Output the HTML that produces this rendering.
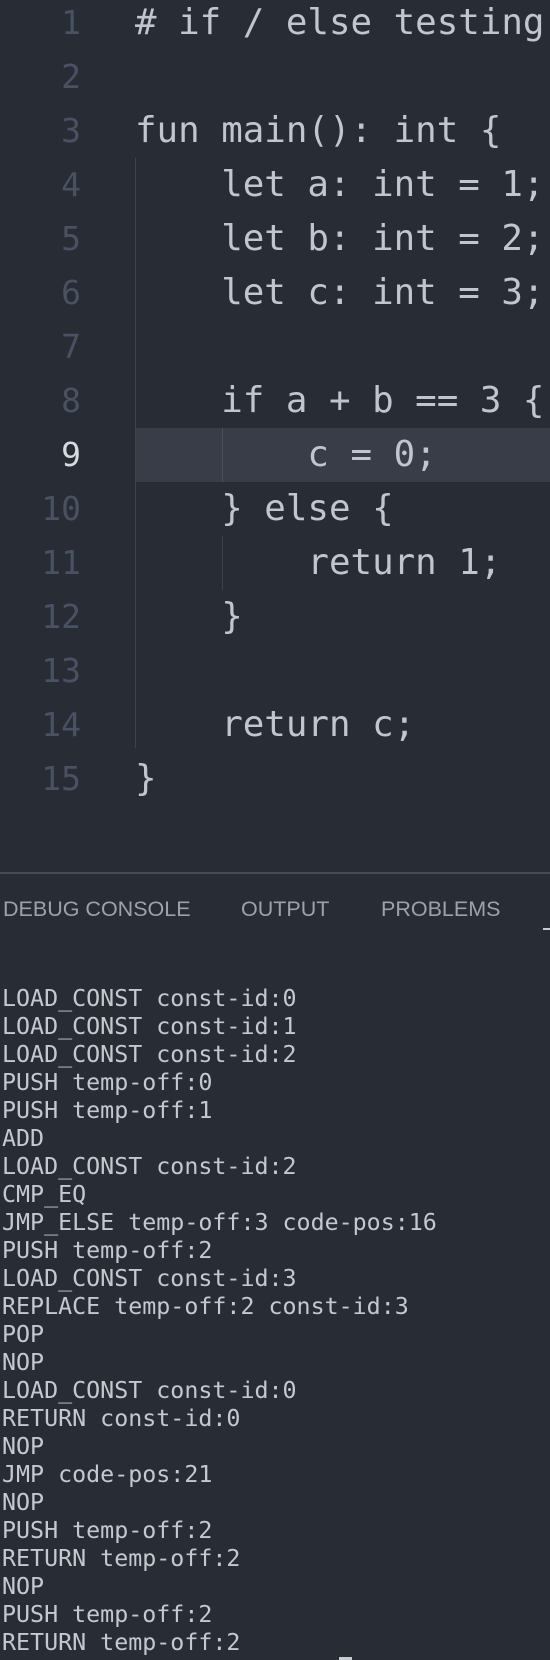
<!DOCTYPE html>
<html><head><style>
body{margin:0;width:550px;height:1660px;background:#282c34;overflow:hidden;position:relative;font-family:"DejaVu Sans Mono","Liberation Mono",monospace}
.ln{position:absolute;left:0;width:81px;text-align:right;color:#495162;font-size:33px;line-height:54px;height:54px}
.cd{position:absolute;left:135px;color:#c0c5ce;font-size:35.8px;line-height:54px;height:54px;white-space:pre;letter-spacing:0}
.hl{position:absolute;left:135px;right:0;top:428px;height:54px;background:#393d48}
.guide{position:absolute;width:1px;background:#3d424c}
.sep{position:absolute;left:0;right:0;top:872px;height:2px;background:#464a52}
.tab{position:absolute;top:897px;line-height:24px;font-family:"Liberation Sans",sans-serif;font-size:21.5px;color:#9da1a8}
.con{position:absolute;left:2px;top:985px;font-size:23.3px;line-height:28px;color:#c4c8cf;white-space:pre;font-family:"DejaVu Sans Mono","Liberation Mono",monospace}
</style></head><body>
<div class="hl"></div>
<div class="guide" style="left:135px;top:158px;height:590px"></div>
<div class="guide" style="left:222px;top:428px;height:54px;background:#4a4f5a"></div>
<div class="guide" style="left:222px;top:536px;height:54px"></div>
<div class="ln" style="top:-4px">1</div><div class="cd" style="top:-4px"># if / else testing</div>
<div class="ln" style="top:50px">2</div>
<div class="ln" style="top:104px">3</div><div class="cd" style="top:104px">fun main(): int {</div>
<div class="ln" style="top:158px">4</div><div class="cd" style="top:158px">    let a: int = 1;</div>
<div class="ln" style="top:212px">5</div><div class="cd" style="top:212px">    let b: int = 2;</div>
<div class="ln" style="top:266px">6</div><div class="cd" style="top:266px">    let c: int = 3;</div>
<div class="ln" style="top:320px">7</div>
<div class="ln" style="top:374px">8</div><div class="cd" style="top:374px">    if a + b == 3 {</div>
<div class="ln" style="top:428px;color:#d7dae0">9</div><div class="cd" style="top:428px">        c = 0;</div>
<div class="ln" style="top:482px">10</div><div class="cd" style="top:482px">    } else {</div>
<div class="ln" style="top:536px">11</div><div class="cd" style="top:536px">        return 1;</div>
<div class="ln" style="top:590px">12</div><div class="cd" style="top:590px">    }</div>
<div class="ln" style="top:644px">13</div>
<div class="ln" style="top:698px">14</div><div class="cd" style="top:698px">    return c;</div>
<div class="ln" style="top:752px">15</div><div class="cd" style="top:752px">}</div>
<div class="sep"></div>
<div class="tab" style="left:3px">DEBUG CONSOLE</div>
<div class="tab" style="left:241px">OUTPUT</div>
<div class="tab" style="left:381px">PROBLEMS</div>
<div style="position:absolute;left:543px;top:928px;width:7px;height:2px;background:#c8ccd2"></div>
<div class="con">LOAD_CONST const-id:0
LOAD_CONST const-id:1
LOAD_CONST const-id:2
PUSH temp-off:0
PUSH temp-off:1
ADD
LOAD_CONST const-id:2
CMP_EQ
JMP_ELSE temp-off:3 code-pos:16
PUSH temp-off:2
LOAD_CONST const-id:3
REPLACE temp-off:2 const-id:3
POP
NOP
LOAD_CONST const-id:0
RETURN const-id:0
NOP
JMP code-pos:21
NOP
PUSH temp-off:2
RETURN temp-off:2
NOP
PUSH temp-off:2
RETURN temp-off:2</div>
<div style="position:absolute;left:339px;top:1657px;width:13px;height:3px;background:#c8ccd2"></div>
</body></html>
